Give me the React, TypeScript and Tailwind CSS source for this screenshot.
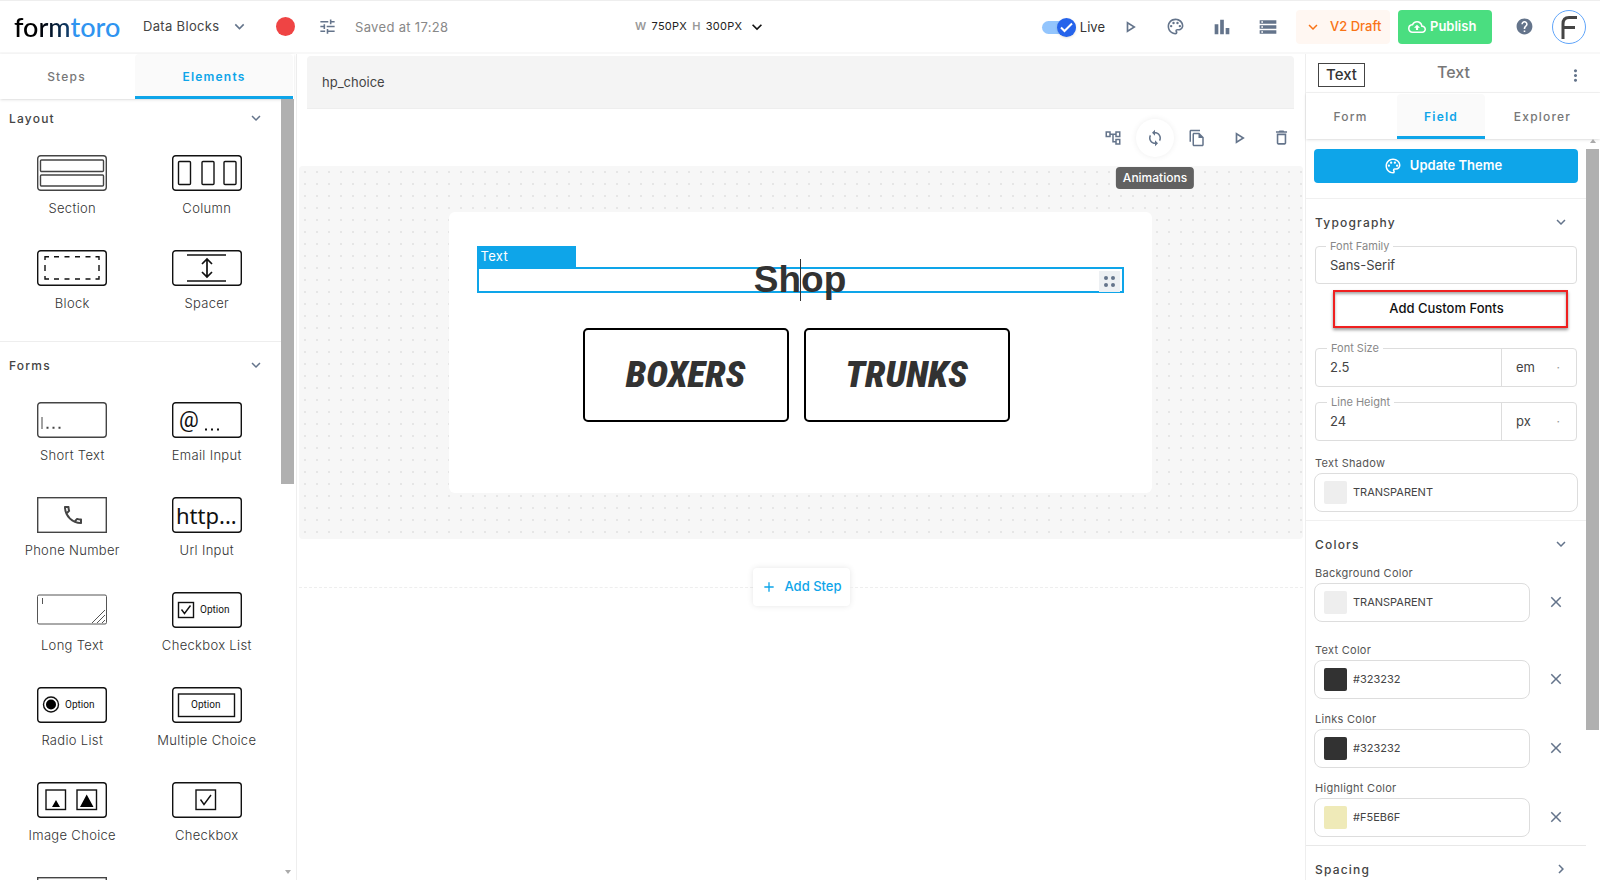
import React from "react";
import {
  MdTune,
  MdExpandMore,
  MdChevronRight,
  MdOutlinePlayArrow,
  MdOutlinePalette,
  MdBarChart,
  MdStorage,
  MdOutlineCloudUpload,
  MdHelp,
  MdOutlineAccountTree,
  MdSync,
  MdOutlineFileCopy,
  MdDeleteOutline,
  MdMoreVert,
  MdClose,
  MdAdd,
  MdOutlinePhone,
} from "react-icons/md";

function Frame({ children, stroke = "#111", rx = 3 }: { children?: React.ReactNode; stroke?: string; rx?: number }) {
  return (
    <svg width="70" height="36" viewBox="0 0 70 36" fill="none" stroke={stroke} strokeWidth="1.4" aria-hidden="true" className="shrink-0">
      <rect x="0.7" y="0.7" width="68.6" height="34.6" rx={rx} />
      {children}
    </svg>
  );
}

const optionText = "font-['Roboto'] text-[10px]";

const layoutItems = [
  {
    label: "Section",
    icon: (
      <Frame stroke="#444">
        <rect x="3.5" y="5" width="63" height="11.5" rx="1" />
        <rect x="3.5" y="20" width="63" height="11" rx="1" />
      </Frame>
    ),
  },
  {
    label: "Column",
    icon: (
      <Frame>
        <rect x="6.5" y="6.5" width="12" height="23" rx="1" />
        <rect x="30" y="6.5" width="12" height="23" rx="1" />
        <rect x="52" y="6.5" width="12" height="23" rx="1" />
      </Frame>
    ),
  },
  {
    label: "Block",
    icon: (
      <Frame>
        <path d="M8 10V6.700H12M17 6.700h5M27.500 6.700h5M38 6.700h5M48.500 6.700h5M58.500 6.700H62V10M62 15v6M62 26v3H58.500M53.500 29h-5M43 29h-5M32.500 29h-5M22 29h-5M12 29H8V26M8 21v-6" />
      </Frame>
    ),
  },
  {
    label: "Spacer",
    icon: (
      <Frame>
        <path d="M15 5h39M15 31h39" />
        <path d="M35 9v18M30 14l5-5 5 5M30 22l5 5 5-5" strokeWidth="1.700" />
      </Frame>
    ),
  },
];

const formItems = [
  {
    label: "Short Text",
    icon: (
      <Frame stroke="#444">
        <path d="M5 15v12" strokeWidth="1" />
        <path d="M9.500 25.700h2M15.500 25.700h2M21.500 25.700h2" strokeWidth="2" />
      </Frame>
    ),
  },
  {
    label: "Email Input",
    icon: (
      <Frame>
        <text x="7" y="25" fill="#111" stroke="none" className="font-['Roboto'] text-[22px]">@</text>
        <path d="M33 27.500h2M39 27.500h2M45 27.500h2" strokeWidth="2" />
      </Frame>
    ),
  },
  {
    label: "Phone Number",
    icon: (
      <Frame stroke="#444" rx={0}>
        <MdOutlinePhone x={24} y={6} size={24} color="#444" stroke="none" />
      </Frame>
    ),
  },
  {
    label: "Url Input",
    icon: (
      <Frame>
        <text x="4" y="27" fill="#111" stroke="none" className="font-['Noto_Sans'] text-[22px]">http...</text>
      </Frame>
    ),
  },
  {
    label: "Long Text",
    icon: (
      <svg width="70" height="36" viewBox="0 0 70 36" fill="none" stroke="#555" strokeWidth="1" aria-hidden="true" className="shrink-0">
        <rect x="0.500" y="3" width="69" height="29" rx="1.500" />
        <path d="M5.500 6v6M55 31l13-13M60 31l8-8M65 31l3-3" />
      </svg>
    ),
  },
  {
    label: "Checkbox List",
    icon: (
      <Frame>
        <rect x="6.500" y="10.500" width="15" height="15" />
        <path d="M9.500 17.500l3 4 6-8" />
        <text x="28" y="21" fill="#111" stroke="none" className={optionText}>Option</text>
      </Frame>
    ),
  },
  {
    label: "Radio List",
    icon: (
      <Frame>
        <circle cx="14" cy="17.500" r="7.500" />
        <circle cx="14" cy="17.500" r="5" fill="#000" stroke="none" />
        <text x="28" y="21" fill="#111" stroke="none" className={optionText}>Option</text>
      </Frame>
    ),
  },
  {
    label: "Multiple Choice",
    icon: (
      <Frame>
        <rect x="6.500" y="7" width="56" height="22.500" />
        <text x="19" y="21" fill="#111" stroke="none" className={optionText}>Option</text>
      </Frame>
    ),
  },
  {
    label: "Image Choice",
    icon: (
      <Frame>
        <rect x="9" y="8" width="19.500" height="19.500" />
        <rect x="40" y="8" width="19.500" height="19.500" />
        <path d="M15 25l4-7 4 7zM43 25l6.700-12.500L56.500 25z" fill="#000" stroke="none" />
      </Frame>
    ),
  },
  {
    label: "Checkbox",
    icon: (
      <Frame>
        <rect x="24" y="8" width="19.500" height="19.500" />
        <path d="M28.500 17.500l3.500 5 7-9.500" />
      </Frame>
    ),
  },
  { label: "", icon: <Frame stroke="#444" rx={0} /> },
];

function Palette({ items }: { items: { label: string; icon: React.ReactNode }[] }) {
  return (
    <div className="grid grid-cols-2 pl-[5px] pr-[7px]">
      {items.map((item) => (
        <button key={item.label} type="button" className="flex h-[95px] flex-col items-center pt-[18px]">
          {item.icon}
          <span className="mt-[7px] text-[13px] font-light leading-5 tracking-wide text-[#333]">{item.label}</span>
        </button>
      ))}
    </div>
  );
}

function Heading({ children, closed }: { children: string; closed?: boolean }) {
  return (
    <button type="button" className="flex h-[38px] w-full items-center justify-between pl-[9px] pr-4 text-left text-[12px] font-medium tracking-widest text-[#444]">
      <span className="pt-0.5">{children}</span>
      {closed ? <MdChevronRight size={18} color="#64748b" /> : <MdExpandMore size={18} color="#64748b" />}
    </button>
  );
}

function ColorField({ id, label, value, swatch, clearable }: { id: string; label: string; value: string; swatch: string; clearable?: boolean }) {
  return (
    <div>
      <label htmlFor={id} className="block pl-px text-[11px] leading-5 tracking-wide text-[#555]">{label}</label>
      <div className="flex items-center">
        <div className="flex h-[39px] min-w-0 flex-1 items-center gap-[6px] rounded-lg border border-[#ddd] pl-[9px]">
          <span className={"size-[23px] shrink-0 rounded-xs " + swatch} />
          <input id={id} defaultValue={value} className="w-full min-w-0 text-[11px] text-[#444] outline-none" />
        </div>
        {clearable && (
          <button type="button" aria-label={"Clear " + label} className="flex w-12 justify-center pb-0.5 pl-1">
            <MdClose size={18} color="#64748b" />
          </button>
        )}
      </div>
    </div>
  );
}

function SizeField({ id, label, value, unit }: { id: string; label: string; value: string; unit: string }) {
  return (
    <div className="relative flex h-[39px] rounded border border-[#ddd]">
      <label htmlFor={id} className="absolute -top-[9px] left-[11px] bg-white px-1 text-[11px] leading-4 text-[#888]">{label}</label>
      <input id={id} defaultValue={value} className="min-w-0 flex-1 rounded pl-[14px] text-[13px] text-[#444] outline-none" />
      <div className="flex w-[75px] items-center border-l border-[#ddd] pl-[14px] pr-4 text-[#444]">
        <select aria-label={label + " unit"} defaultValue={unit} className="min-w-0 flex-1 appearance-none text-[13px] outline-none">
          <option>{unit}</option>
        </select>
        <span className="text-xs text-[#999]">·</span>
      </div>
    </div>
  );
}

function Header() {
  return (
    <header className="flex h-[54px] shrink-0 items-center border-b-2 border-t border-b-[#f8f8f8] border-t-[#eee] pl-[14px] pr-[14px] text-[#64748b]">
      <a href="#" className="w-[129px] font-['Lato'] text-[27px] font-medium leading-9 text-[#2f94f0]">
        <span className="bg-linear-to-r from-black from-30% to-[#12406f] bg-clip-text text-transparent">form</span>toro
      </a>
      <button type="button" className="flex w-[133px] items-center gap-[11px] text-[13px] tracking-wide text-[#444]">
        Data Blocks <MdExpandMore size={19} color="#64748b" />
      </button>
      <button type="button" aria-label="Record" className="size-[19px] rounded-full bg-[#ef4444]" />
      <button type="button" aria-label="Settings" className="ml-[23px] mr-[18px]"><MdTune size={19} /></button>
      <span className="w-[280px] pt-0.5 text-[13px] tracking-wide text-[#888]">Saved at 17:28</span>
      <button type="button" className="flex items-center text-[11px] tracking-wide text-[#222]">
        <b className="mr-[5px] font-semibold text-[#999]">W</b>750PX<b className="mx-[5px] font-semibold text-[#999]">H</b>300PX
        <MdExpandMore size={20} color="#111" className="ml-[5px]" />
      </button>
      <div className="ml-auto flex items-center">
        <label className="mr-[15px] flex items-center gap-1 pt-0.5 text-[13px] text-[#333]">
          <span className="relative flex h-[19px] w-[34px] items-center">
            <input type="checkbox" defaultChecked className="peer sr-only" />
            <span className="h-[13px] w-full rounded-full bg-[#93c5fd]" />
            <span className="absolute right-0 flex size-[19px] items-center justify-center rounded-full bg-[#2563eb] shadow">
              <svg width="13" height="11" viewBox="0 0 13 11" fill="none" stroke="#fff" strokeWidth="2" aria-hidden="true"><path d="M1 5.500l3.500 3.500L12 1.500" /></svg>
            </span>
          </span>
          Live
        </label>
        <button type="button" aria-label="Preview" className="flex w-[46px] justify-start"><MdOutlinePlayArrow size={20} /></button>
        <button type="button" aria-label="Theme" className="flex w-[45px]"><MdOutlinePalette size={19} /></button>
        <button type="button" aria-label="Analytics" className="flex w-[47px]"><MdBarChart size={22} /></button>
        <button type="button" aria-label="Responses" className="flex w-[38px]"><MdStorage size={20} /></button>
        <button type="button" className="flex h-[34px] w-[94px] items-center gap-2 rounded bg-[#fff7f2] pl-2 text-[13px] font-medium text-[#f97316]">
          <MdExpandMore size={18} /> V2 Draft
        </button>
        <button type="button" className="ml-2 flex h-[34px] w-[94px] items-center gap-1 rounded bg-[#4ade80] pl-[10px] text-[13px] font-semibold text-white">
          <MdOutlineCloudUpload size={18} /> Publish
        </button>
        <button type="button" aria-label="Help" className="ml-[23px] mr-[18px]"><MdHelp size={19} /></button>
        <button type="button" aria-label="Account" className="flex size-[34px] items-center justify-center rounded-full border border-[#60a5fa]">
          <svg width="18" height="24" viewBox="0 0 18 24" fill="none" stroke="#444" strokeWidth="3" aria-hidden="true">
            <path d="M17 2.500H9Q3 2.500 3 9V24M3 12.500H15" />
          </svg>
        </button>
      </div>
    </header>
  );
}

function Sidebar() {
  return (
    <aside className="flex w-[297px] shrink-0 flex-col border-r border-[#eee] pr-0.5">
      <div className="flex h-[45px] shrink-0 text-[12px] font-medium tracking-widest shadow-sm" role="tablist">
        <button type="button" role="tab" aria-selected="false" className="w-[135px] pr-0.5 text-[#777]">Steps</button>
        <button type="button" role="tab" aria-selected="true" className="mr-px flex-1 rounded-t border-b-[3px] border-[#0ea5e9] bg-[#fafafa] pt-[3px] font-semibold text-[#0ea5e9]">Elements</button>
      </div>
      <div className="flex min-h-0 flex-1">
        <div className="min-w-0 flex-1 overflow-hidden">
          <section className="border-b border-[#eee] pb-[14px]">
            <Heading>Layout</Heading>
            <Palette items={layoutItems} />
          </section>
          <section className="pt-1">
            <Heading>Forms</Heading>
            <Palette items={formItems} />
          </section>
        </div>
        <div className="flex w-[13px] flex-col justify-between">
          <div className="h-[385px] bg-[#b0b0b0]" />
          <div className="mx-auto mb-1.5 border-x-[3px] border-t-4 border-x-transparent border-t-[#aaa]" />
        </div>
      </div>
    </aside>
  );
}

function Workspace() {
  const round = "relative flex size-[38px] items-center justify-center rounded-full";
  return (
    <main className="flex min-w-0 flex-1 flex-col pt-0.5">
      <input aria-label="Step name" defaultValue="hp_choice" className="ml-2.5 mr-[11px] h-[53px] rounded-t border-b border-[#eee] bg-[#f4f4f4] px-[15px] text-[13px] text-[#444] outline-none" />
      <div className="flex h-[57px] items-center justify-end gap-1 pr-[5px] text-[#64748b]">
        <button type="button" aria-label="Logic" className={round}><MdOutlineAccountTree size={18} /></button>
        <button type="button" aria-label="Animations" className={round + " shadow-[0_0_6px_rgba(0,0,0,0.07)]"}>
          <MdSync size={18} />
          <span role="tooltip" className="absolute left-1/2 top-[48px] z-10 -translate-x-1/2 rounded bg-[#616161] px-[7px] text-xs font-medium leading-[22px] text-white">Animations</span>
        </button>
        <button type="button" aria-label="Duplicate" className={round}><MdOutlineFileCopy size={18} /></button>
        <button type="button" aria-label="Play" className={round}><MdOutlinePlayArrow size={20} /></button>
        <button type="button" aria-label="Delete" className={round}><MdDeleteOutline size={19} /></button>
      </div>
      <div className="mx-0.5 flex h-[373px] shrink-0 items-start justify-center rounded bg-[#f7f7f7] bg-[radial-gradient(circle,#e6e6e6_1px,transparent_1px)] bg-size-[12px_12px] pr-0.5 pt-[46px]">
        <div className="h-[281px] w-[703px] rounded-md bg-white px-7 pt-[34px]">
          <div className="w-[99px] bg-[#0ea5e9] pl-1 text-[13px] leading-[21px] tracking-wide text-white">Text</div>
          <div className="relative flex h-[26px] items-center justify-center border-2 border-[#0ea5e9]">
            <h1 className="font-['Liberation_Sans'] text-[37px] font-bold leading-6 text-[#323232]">Shop</h1>
            <span className="absolute -top-[10px] left-1/2 h-[42px] w-px bg-[#333]" />
            <span className="absolute right-0.5 top-0.5 grid size-[21px] grid-cols-[4px_4px] place-content-center gap-[3px] bg-[#edf0f3]">
              {[0, 1, 2, 3].map((n) => (
                <i key={n} className="size-1 rounded-full bg-[#64748b]" />
              ))}
            </span>
          </div>
          <div className="mt-[35px] flex justify-center gap-[15px] pr-2">
            {["BOXERS", "TRUNKS"].map((name) => (
              <button key={name} type="button" className="h-[94px] w-[206px] rounded-[5px] border-2 border-black font-['Roboto_Condensed','Roboto',sans-serif] text-[37px] font-black italic text-[#323232]">
                {name}
              </button>
            ))}
          </div>
        </div>
      </div>
      <div className="mx-0.5 mt-[29px] flex items-center">
        <div className="flex-1 border-t border-dashed border-[#eee]" />
        <button type="button" className="flex h-[38px] w-[97px] items-center gap-2 rounded pl-2 text-[13px] font-medium text-[#0ea5e9] shadow-[0_0_6px_rgba(0,0,0,0.1)]">
          <MdAdd size={16} /> Add Step
        </button>
        <div className="flex-1 border-t border-dashed border-[#eee]" />
      </div>
    </main>
  );
}

function Inspector() {
  return (
    <aside className="flex w-[295px] shrink-0 flex-col border-l border-[#eee]">
      <div className="flex h-[39px] shrink-0 items-center border-b border-[#f3f3f3] pl-3 pr-[15px]">
        <span className="mt-1 h-6 w-[47px] border border-[#444] text-center text-[15px] font-medium leading-[22px] text-[#333]">Text</span>
        <h2 className="flex-1 pb-0.5 pr-6 text-center text-base font-medium text-[#777]">Text</h2>
        <button type="button" aria-label="More" className="mt-1"><MdMoreVert size={19} color="#64748b" /></button>
      </div>
      <div className="flex h-[46px] shrink-0 pt-px text-[12px] font-medium tracking-widest text-[#777] shadow-sm" role="tablist">
        <button type="button" role="tab" aria-selected="false" className="w-[91px] pr-0.5">Form</button>
        <button type="button" role="tab" aria-selected="true" className="w-[88px] rounded-t border-b-[3px] border-[#0ea5e9] bg-[#fafafa] pt-[3px] font-semibold text-[#0ea5e9]">Field</button>
        <button type="button" role="tab" aria-selected="false" className="flex-1">Explorer</button>
      </div>
      <div className="flex min-h-0 flex-1">
        <div className="min-w-0 flex-1 overflow-hidden">
          <div className="border-b border-[#f0f0f0] px-2 pb-[15px] pt-[10px]">
            <button type="button" className="flex h-[34px] w-full items-center justify-center gap-2 rounded bg-[#0ea5e9] pr-1.5 text-[13px] font-semibold text-white">
              <MdOutlinePalette size={18} /> Update Theme
            </button>
          </div>
          <section className="border-b border-[#f0f0f0] pb-2 pt-1">
            <Heading>Typography</Heading>
            <div className="px-[9px] pt-[5px]">
              <div className="relative">
                <label htmlFor="family" className="absolute -top-2 left-[11px] bg-white px-1 text-[11px] leading-4 text-[#888]">Font Family</label>
                <input id="family" defaultValue="Sans-Serif" className="h-[38px] w-full rounded border border-[#ddd] pl-[14px] text-[13px] text-[#444] outline-none" />
              </div>
              <button type="button" className="ml-[18px] mt-1.5 block h-[38px] w-[235px] border-2 border-[#ef2020] pr-2 text-[13px] font-medium text-[#111] shadow-[0_2px_3px_rgba(0,0,0,0.4),inset_0_2px_3px_rgba(0,0,0,0.35)]">
                Add Custom Fonts
              </button>
              <div className="mt-5 flex flex-col gap-[15px]">
                <SizeField id="size" label="Font Size" value="2.5" unit="em" />
                <SizeField id="line" label="Line Height" value="24" unit="px" />
              </div>
            </div>
            <div className="mt-3 px-2">
              <ColorField id="shadow" label="Text Shadow" value="TRANSPARENT" swatch="bg-[#eee]" />
            </div>
          </section>
          <section className="border-b border-[#e8e8e8] pb-2 pt-1">
            <Heading>Colors</Heading>
            <div className="flex flex-col gap-[10px] px-2">
              <div className="pb-2"><ColorField id="bg" label="Background Color" value="TRANSPARENT" swatch="bg-[#eee]" clearable /></div>
              <ColorField id="text" label="Text Color" value="#323232" swatch="bg-[#323232]" clearable />
              <ColorField id="links" label="Links Color" value="#323232" swatch="bg-[#323232]" clearable />
              <ColorField id="highlight" label="Highlight Color" value="#F5EB6F" swatch="bg-[#efeab8]" clearable />
            </div>
          </section>
          <section className="pt-1">
            <Heading closed>Spacing</Heading>
          </section>
        </div>
        <div className="mr-px flex w-[13px] flex-col">
          <div className="mx-auto mb-1.5 border-x-[3px] border-b-4 border-x-transparent border-b-[#aaa]" />
          <div className="h-[581px] bg-[#b0b0b0]" />
        </div>
      </div>
    </aside>
  );
}

export default function App() {
  return (
    <div className="flex h-screen flex-col overflow-hidden bg-white font-['Inter',sans-serif]">
      <Header />
      <div className="flex min-h-0 flex-1">
        <Sidebar />
        <Workspace />
        <Inspector />
      </div>
    </div>
  );
}
